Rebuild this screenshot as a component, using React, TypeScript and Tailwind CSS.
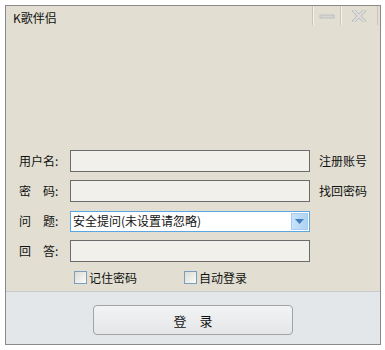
import { useState } from "react";

const FONT = { fontFamily: '"Noto Sans CJK SC", "Noto Sans", sans-serif' };

const Label = ({ text }: { text: string }) => (
  <span className="w-[51px] shrink-0 text-[12px] leading-none text-[#111]">{text}</span>
);

const TextBox = () => (
  <div className="h-[22px] w-[240px] border border-[#6b6b6b] bg-[#f2f0ea]" />
);

const Check = ({ label, checked, onClick }: { label: string; checked: boolean; onClick: () => void }) => (
  <button onClick={onClick} className="flex items-center gap-[2px] text-[12px] leading-none text-[#111]">
    <span className="flex h-[13px] w-[13px] items-center justify-center border border-[#7b9ebd] bg-gradient-to-br from-[#dcdcd5] to-[#fbfbf9]">
      {checked && <span className="text-[10px] text-[#21a121]">✓</span>}
    </span>
    <span>{label}</span>
  </button>
);

const App = () => {
  const [remember, setRemember] = useState(false);
  const [auto, setAuto] = useState(false);

  return (
    <div className="h-[350px] w-[385px] bg-white pl-[5px] pt-[5px]" style={FONT}>
      <div className="flex h-[340px] w-[376px] flex-col border border-[#8a8a8a]">
        <section className="flex h-[285px] flex-col bg-[#e2dfd2]">
          {/* title bar */}
          <div className="flex h-[20px] items-start">
            <span className="pl-[7px] pt-[6px] text-[12px] leading-none text-[#111]">K歌伴侣</span>
            <div className="ml-auto flex h-[19px] items-stretch">
              <div className="flex w-[28px] items-center justify-center border-l border-l-[#c9c5b9] pt-[2px] shadow-[inset_1px_0_0_#f4f2ec]">
                <svg width="16" height="5" viewBox="0 0 16 5">
                  <rect x="1" y="1" width="14" height="3" fill="#d6d6d6" stroke="#b8b8b8" strokeWidth="0.8" />
                </svg>
              </div>
              <div className="flex w-[38px] items-center justify-center border-x border-x-[#c9c5b9] shadow-[inset_1px_0_0_#f4f2ec]">
                <svg width="14" height="12" viewBox="0 0 14 12">
                  <path d="M2 1 L12 11 M12 1 L2 11" stroke="#b8b8b8" strokeWidth="3.4" strokeLinecap="square" />
                  <path d="M2 1 L12 11 M12 1 L2 11" stroke="#dedede" strokeWidth="2" strokeLinecap="square" />
                </svg>
              </div>
              <div className="w-[2px]" />
            </div>
          </div>

          {/* form */}
          <div className="mt-[124px] flex flex-col gap-[8px] pl-[13px]">
            <div className="flex h-[22px] items-center">
              <Label text="用户名:" />
              <TextBox />
              <span className="ml-[9px] text-[12px] leading-none text-[#111]">注册账号</span>
            </div>
            <div className="flex h-[22px] items-center">
              <Label text="密　码:" />
              <TextBox />
              <span className="ml-[9px] text-[12px] leading-none text-[#111]">找回密码</span>
            </div>
            <div className="flex h-[22px] items-center">
              <Label text="问　题:" />
              <div className="flex h-[21px] w-[240px] items-center border border-[#5ba6e0] bg-white pl-[2px] pr-[1px]">
                <span className="text-[12px] leading-none text-[#111]">安全提问(未设置请忽略)</span>
                <div className="ml-auto flex h-[17px] w-[17px] items-center justify-center border border-[#a4cdf1] bg-gradient-to-r from-[#c9e2f9] to-[#aed3f4]">
                  <svg width="9" height="5" viewBox="0 0 9 5">
                    <path d="M0 0 H9 L4.5 5 Z" fill="#3f7fbf" />
                  </svg>
                </div>
              </div>
            </div>
            <div className="flex h-[22px] items-center">
              <Label text="回　答:" />
              <TextBox />
            </div>
            <div className="ml-[55px] mt-[1px] flex items-center gap-[47px]">
              <Check label="记住密码" checked={remember} onClick={() => setRemember(!remember)} />
              <Check label="自动登录" checked={auto} onClick={() => setAuto(!auto)} />
            </div>
          </div>
        </section>

        <section className="flex flex-1 items-start justify-center border-t border-t-[#c9cacb] bg-[#e4e7e9] pt-[13px]">
          <button className="flex h-[30px] w-[200px] items-center justify-center rounded-[4px] border border-[#a3a3a3] bg-gradient-to-b from-[#f2f3f4] to-[#e4e6e8] text-[13px] leading-none text-[#111]">
            登　录
          </button>
        </section>
      </div>
    </div>
  );
};

export default App;
